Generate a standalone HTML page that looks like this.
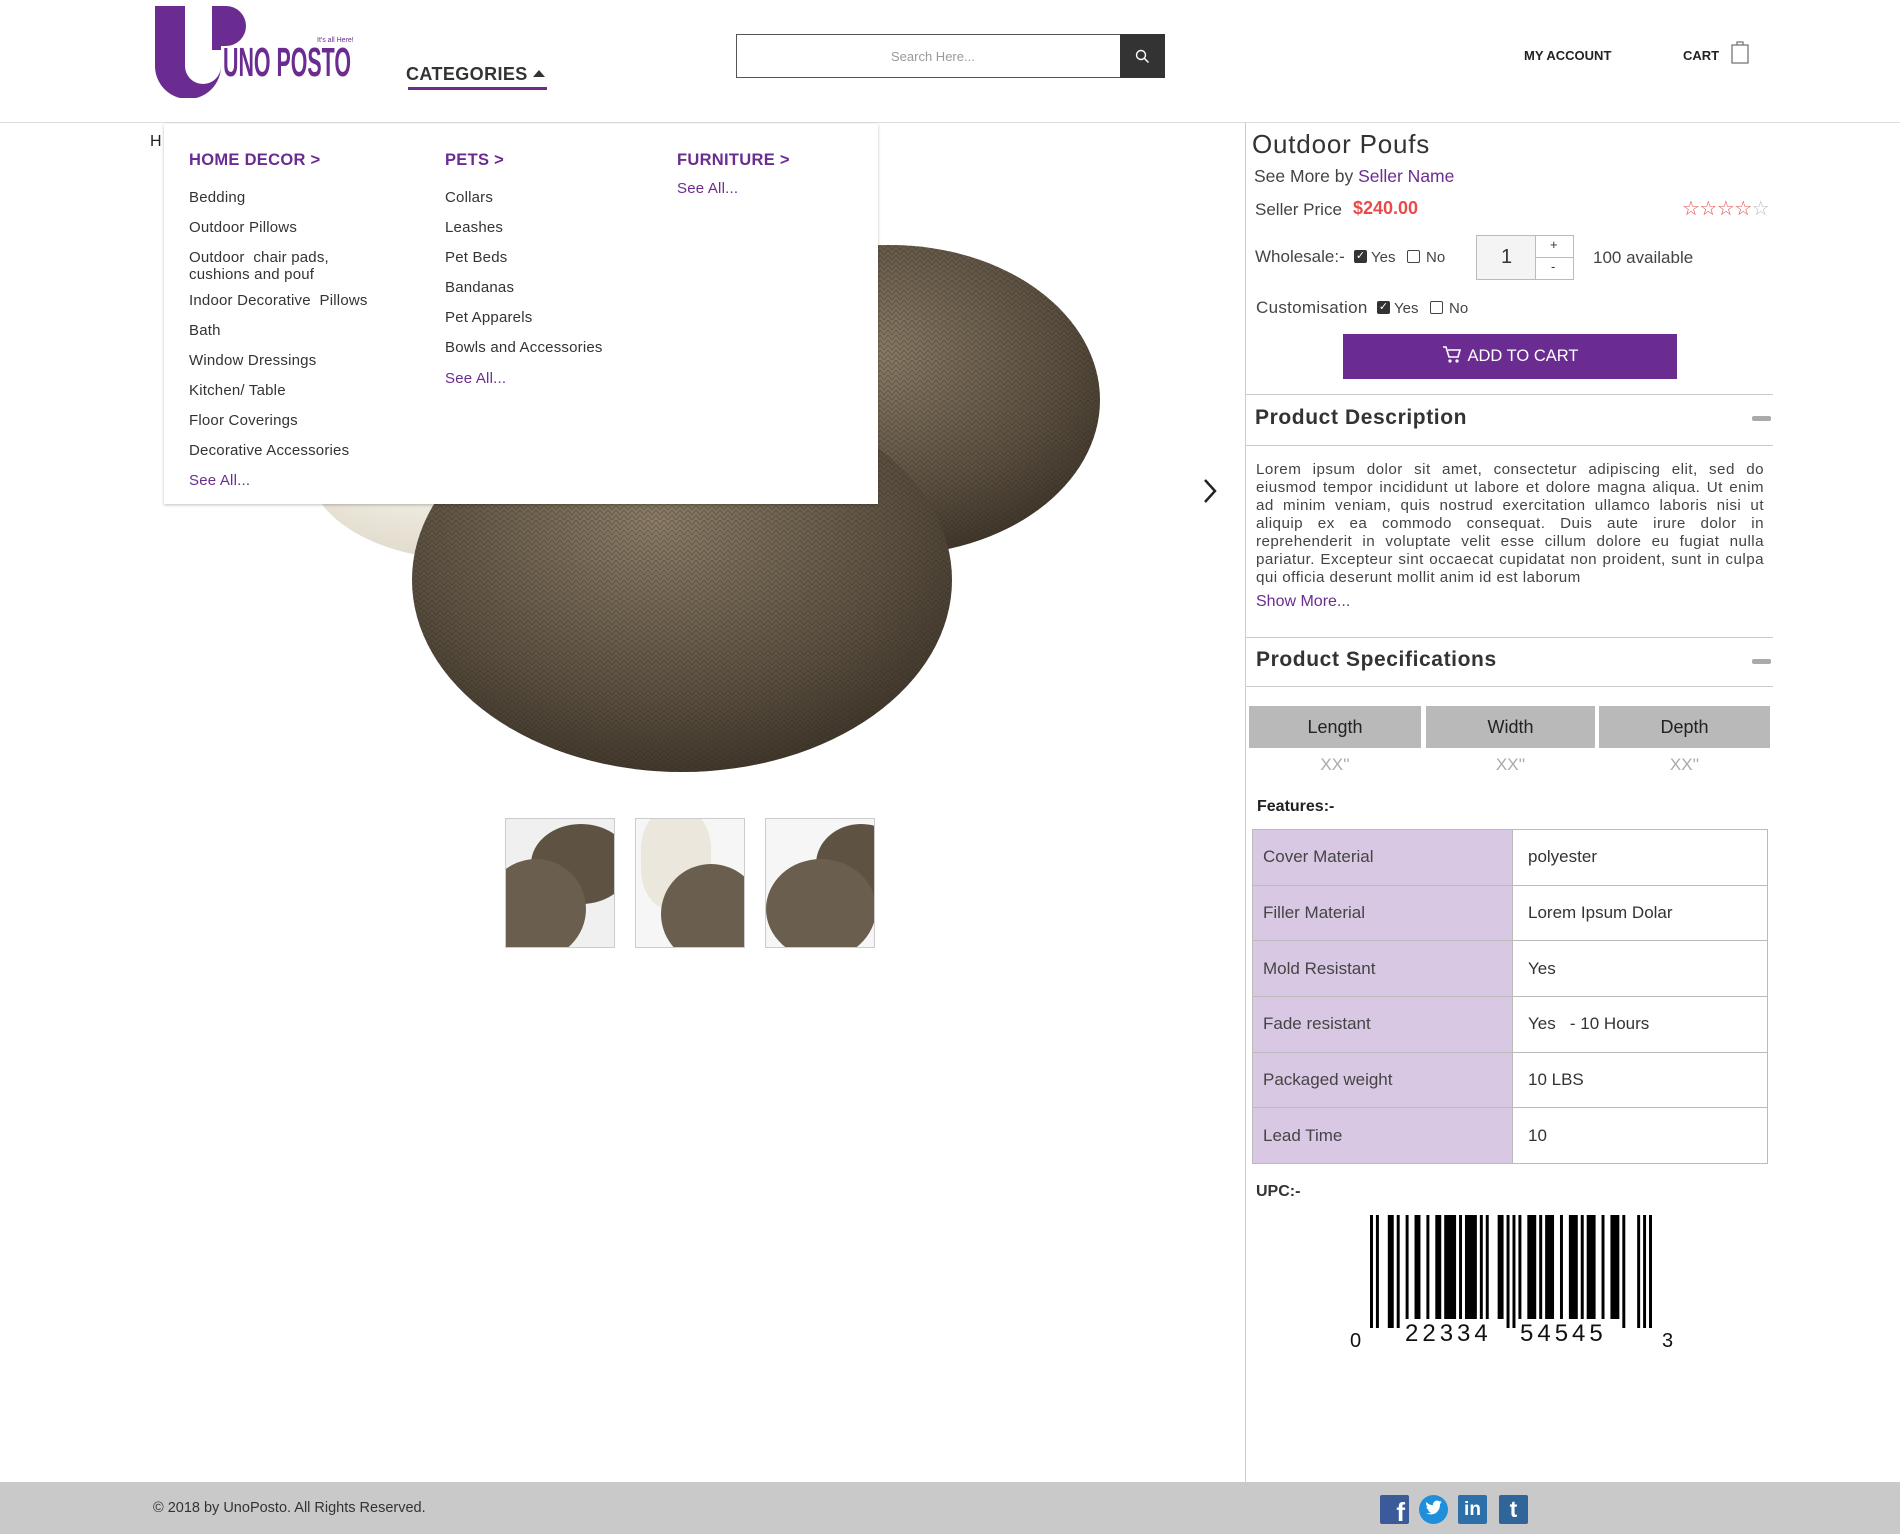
<!DOCTYPE html>
<html><head><meta charset="utf-8">
<style>
*{margin:0;padding:0;box-sizing:border-box}
body{width:1900px;height:1534px;position:relative;background:#fff;font-family:"Liberation Sans",sans-serif;color:#333;overflow:hidden}
.a{position:absolute;white-space:nowrap}
.dd div{position:absolute;font-size:15px;color:#333;white-space:nowrap;letter-spacing:.2px}
.dd .h{color:#6b2c91;font-size:16.5px;font-weight:bold;letter-spacing:.3px}
.dd .s{color:#6b2c91}
.r{font-size:17px;color:#444}
.spec td{font-size:17px;color:#444;border:1px solid #bbb;padding-left:10px;height:55.7px}
.spec td.l{background:#d9c8e4;width:260px}
.spec td.v{padding-left:15px;color:#333}
</style></head><body>

<svg class="a" style="left:155px;top:6px" width="200" height="92" viewBox="0 0 200 92">
<path d="M0 0h30v60a18 18 0 0 0 36 0V44h-9V0h14a20 20 0 0 1 0 40h-5v20a33 33 0 0 1-66 0z" fill="#6b2c91"/>
<text x="68" y="70" font-family="Liberation Sans Narrow,Liberation Sans,sans-serif" font-weight="bold" font-size="41" fill="#6b2c91" textLength="128" lengthAdjust="spacingAndGlyphs">UNO POSTO</text>
<text x="162" y="36" font-size="7" fill="#6b2c91">It's all Here!</text>
</svg>
<div class="a" style="left:406px;top:64px;font-size:18px;font-weight:bold;letter-spacing:.4px;color:#333">CATEGORIES</div>
<div class="a" style="left:533px;top:70px;width:0;height:0;border-left:6px solid transparent;border-right:6px solid transparent;border-bottom:7px solid #333"></div>
<div class="a" style="left:408px;top:87px;width:139px;height:3px;background:#6b2c91"></div>

<div class="a" style="left:736px;top:34px;width:429px;height:44px;border:1px solid #555"></div>
<div class="a" style="left:891px;top:49px;font-size:13px;color:#999">Search Here...</div>
<div class="a" style="left:1120px;top:34px;width:45px;height:44px;background:#333"></div>
<svg class="a" style="left:1135px;top:49px" width="15" height="15" viewBox="0 0 15 15"><circle cx="6" cy="6" r="4.5" stroke="#fff" stroke-width="1.4" fill="none"/><path d="M9.5 9.5l4 4" stroke="#fff" stroke-width="1.5"/></svg>

<div class="a" style="left:1524px;top:48px;font-size:13px;font-weight:bold;color:#222">MY ACCOUNT</div>
<div class="a" style="left:1683px;top:48px;font-size:13px;font-weight:bold;color:#222">CART</div>
<svg class="a" style="left:1730px;top:40px" width="20" height="24" viewBox="0 0 20 24"><rect x="2" y="5" width="16" height="18" fill="none" stroke="#777" stroke-width="1.3"/><path d="M7 5V2h6v3" fill="none" stroke="#777" stroke-width="1.3"/></svg>

<div class="a" style="left:0;top:122px;width:1900px;height:1px;background:#ddd"></div>
<div class="a" style="left:1245px;top:122px;width:1px;height:1360px;background:#ccc"></div>

<div class="a" style="left:150px;top:133px;font-size:16px;color:#222">H</div>

<svg class="a" style="left:250px;top:200px" width="950" height="600" viewBox="250 200 950 600">
<defs>
<radialGradient id="g1" cx="45%" cy="35%" r="70%"><stop offset="0" stop-color="#8a7c66"/><stop offset=".6" stop-color="#5e5343"/><stop offset="1" stop-color="#3b3227"/></radialGradient>
<radialGradient id="g2" cx="40%" cy="40%" r="70%"><stop offset="0" stop-color="#fbf8f1"/><stop offset="1" stop-color="#ddd6c6"/></radialGradient>
<pattern id="kn" width="8" height="10" patternUnits="userSpaceOnUse"><path d="M0 0l4 5l4-5M0 5l4 5l4-5" stroke="#2d261c" stroke-opacity=".35" fill="none" stroke-width="1"/></pattern>
</defs>
<ellipse cx="470" cy="470" rx="160" ry="90" fill="url(#g2)"/>
<ellipse cx="890" cy="400" rx="210" ry="155" fill="url(#g1)"/>
<ellipse cx="890" cy="400" rx="210" ry="155" fill="url(#kn)"/>
<ellipse cx="682" cy="580" rx="270" ry="192" fill="url(#g1)"/>
<ellipse cx="682" cy="580" rx="270" ry="192" fill="url(#kn)"/>
</svg>
<svg class="a" style="left:1202px;top:478px" width="16" height="26" viewBox="0 0 16 26"><path d="M3 2l10 11L3 24" stroke="#222" stroke-width="2.5" fill="none"/></svg>

<div class="a" style="left:505px;top:818px;width:110px;height:130px;border:1px solid #ccc;background:#f0f0f0;overflow:hidden"><div style="position:absolute;left:25px;top:5px;width:100px;height:80px;border-radius:50%;background:#5e5343"></div><div style="position:absolute;left:-20px;top:40px;width:100px;height:100px;border-radius:50%;background:#6a5f4e"></div></div>
<div class="a" style="left:635px;top:818px;width:110px;height:130px;border:1px solid #ccc;background:#f6f6f6;overflow:hidden"><div style="position:absolute;left:5px;top:-10px;width:70px;height:100px;border-radius:40%;background:#ece7dc"></div><div style="position:absolute;left:25px;top:45px;width:100px;height:100px;border-radius:50%;background:#6a5f4e"></div></div>
<div class="a" style="left:765px;top:818px;width:110px;height:130px;border:1px solid #ccc;background:#f6f6f6;overflow:hidden"><div style="position:absolute;left:50px;top:5px;width:90px;height:80px;border-radius:50%;background:#5e5343"></div><div style="position:absolute;left:0;top:40px;width:110px;height:100px;border-radius:50%;background:#6a5f4e"></div></div>

<div class="a dd" style="left:164px;top:124px;width:714px;height:380px;background:#fff;box-shadow:0 1px 3px rgba(0,0,0,.25)">
<div class="h" style="left:25px;top:27px">HOME DECOR &gt;</div>
<div style="left:25px;top:65px">Bedding</div>
<div style="left:25px;top:95px">Outdoor Pillows</div>
<div style="left:25px;top:125px;line-height:17px">Outdoor&nbsp; chair pads,<br>cushions and pouf</div>
<div style="left:25px;top:168px">Indoor Decorative&nbsp; Pillows</div>
<div style="left:25px;top:198px">Bath</div>
<div style="left:25px;top:228px">Window Dressings</div>
<div style="left:25px;top:258px">Kitchen/ Table</div>
<div style="left:25px;top:288px">Floor Coverings</div>
<div style="left:25px;top:318px">Decorative Accessories</div>
<div class="s" style="left:25px;top:348px">See All...</div>
<div class="h" style="left:281px;top:27px">PETS &gt;</div>
<div style="left:281px;top:65px">Collars</div>
<div style="left:281px;top:95px">Leashes</div>
<div style="left:281px;top:125px">Pet Beds</div>
<div style="left:281px;top:155px">Bandanas</div>
<div style="left:281px;top:185px">Pet Apparels</div>
<div style="left:281px;top:215px">Bowls and Accessories</div>
<div class="s" style="left:281px;top:246px">See All...</div>
<div class="h" style="left:513px;top:27px">FURNITURE &gt;</div>
<div class="s" style="left:513px;top:56px">See All...</div>
</div>

<div class="a" style="left:1252px;top:129px;font-size:26px;color:#333;letter-spacing:.8px">Outdoor Poufs</div>
<div class="a" style="left:1254px;top:166px;font-size:17.5px;color:#444">See More by <span style="color:#6b2c91">Seller Name</span></div>
<div class="a" style="left:1255px;top:200px;font-size:17px;color:#444">Seller Price</div>
<div class="a" style="left:1353px;top:198px;font-size:18px;font-weight:bold;color:#e84b4b">$240.00</div>
<div class="a" style="left:1682px;top:196px;font-size:20px;color:#e84b4b;letter-spacing:-0.5px">☆☆☆☆<span style="color:#bbb">☆</span></div>

<div class="a r" style="left:1255px;top:247px">Wholesale:-</div>
<div class="a" style="left:1354px;top:250px;width:13px;height:13px;background:#333;border-radius:2px;color:#fff;font-size:11px;line-height:13px;text-align:center">✓</div>
<div class="a" style="left:1371px;top:249px;font-size:15px;color:#444">Yes</div>
<div class="a" style="left:1407px;top:250px;width:13px;height:13px;border:1px solid #444;border-radius:2px"></div>
<div class="a" style="left:1426px;top:249px;font-size:15px;color:#444">No</div>
<div class="a" style="left:1476px;top:235px;width:98px;height:45px;border:1px solid #bbb;background:#f4f4f4"></div>
<div class="a" style="left:1535px;top:235px;width:39px;height:45px;border:1px solid #bbb;background:#fff"></div>
<div class="a" style="left:1535px;top:257px;width:39px;height:1px;background:#bbb"></div>
<div class="a" style="left:1501px;top:246px;font-size:20px;color:#333">1</div>
<div class="a" style="left:1550px;top:237px;font-size:13px">+</div>
<div class="a" style="left:1551px;top:259px;font-size:13px">-</div>
<div class="a r" style="left:1593px;top:248px">100 available</div>

<div class="a r" style="left:1256px;top:298px;letter-spacing:.3px">Customisation</div>
<div class="a" style="left:1377px;top:301px;width:13px;height:13px;background:#333;border-radius:2px;color:#fff;font-size:11px;line-height:13px;text-align:center">✓</div>
<div class="a" style="left:1394px;top:300px;font-size:15px;color:#444">Yes</div>
<div class="a" style="left:1430px;top:301px;width:13px;height:13px;border:1px solid #444;border-radius:2px"></div>
<div class="a" style="left:1449px;top:300px;font-size:15px;color:#444">No</div>

<div class="a" style="left:1343px;top:334px;width:334px;height:45px;background:#6b2c91;color:#fff;font-size:16.5px;line-height:45px;text-align:center"><svg width="20" height="18" viewBox="0 0 20 18" style="vertical-align:-3px;margin-right:6px"><path d="M1 1h3l3 10h9l2-7H6" fill="none" stroke="#fff" stroke-width="1.6"/><circle cx="8" cy="15" r="1.6" fill="#fff"/><circle cx="15" cy="15" r="1.6" fill="#fff"/></svg>ADD TO CART</div>

<div class="a" style="left:1246px;top:394px;width:527px;height:1px;background:#ccc"></div>
<div class="a" style="left:1255px;top:406px;font-size:21px;font-weight:bold;color:#333;letter-spacing:.6px">Product Description</div>
<div class="a" style="left:1752px;top:416px;width:19px;height:5px;background:#aaa;border-radius:2px"></div>
<div class="a" style="left:1246px;top:445px;width:527px;height:1px;background:#ccc"></div>
<div class="a" style="left:1256px;top:461px;width:508px;white-space:normal;text-align:justify;font-size:15.2px;line-height:18px;color:#444;letter-spacing:.45px">Lorem ipsum dolor sit amet, consectetur adipiscing elit, sed do eiusmod tempor incididunt ut labore et dolore magna aliqua. Ut enim ad minim veniam, quis nostrud exercitation ullamco laboris nisi ut aliquip ex ea commodo consequat. Duis aute irure dolor in reprehenderit in voluptate velit esse cillum dolore eu fugiat nulla pariatur. Excepteur sint occaecat cupidatat non proident, sunt in culpa qui officia deserunt mollit anim id est laborum</div>
<div class="a" style="left:1256px;top:593px;font-size:16px;color:#6b2c91">Show More...</div>
<div class="a" style="left:1246px;top:637px;width:527px;height:1px;background:#ccc"></div>
<div class="a" style="left:1256px;top:648px;font-size:21px;font-weight:bold;color:#333;letter-spacing:.6px">Product Specifications</div>
<div class="a" style="left:1752px;top:659px;width:19px;height:5px;background:#aaa;border-radius:2px"></div>
<div class="a" style="left:1246px;top:686px;width:527px;height:1px;background:#ccc"></div>

<div class="a" style="left:1249px;top:706px;width:172px;height:42px;background:#b9b9b9;text-align:center;line-height:42px;font-size:18px;color:#222">Length</div>
<div class="a" style="left:1426px;top:706px;width:169px;height:42px;background:#b9b9b9;text-align:center;line-height:42px;font-size:18px;color:#222">Width</div>
<div class="a" style="left:1599px;top:706px;width:171px;height:42px;background:#b9b9b9;text-align:center;line-height:42px;font-size:18px;color:#222">Depth</div>
<div class="a" style="left:1249px;top:755px;width:172px;text-align:center;font-size:17px;color:#aaa">XX''</div>
<div class="a" style="left:1426px;top:755px;width:169px;text-align:center;font-size:17px;color:#aaa">XX''</div>
<div class="a" style="left:1599px;top:755px;width:171px;text-align:center;font-size:17px;color:#aaa">XX''</div>

<div class="a" style="left:1257px;top:798px;font-size:16px;font-weight:bold;color:#222">Features:-</div>
<table class="a spec" style="left:1252px;top:829px;width:516px;border-collapse:collapse">
<tr><td class="l">Cover Material</td><td class="v">polyester</td></tr>
<tr><td class="l">Filler Material</td><td class="v">Lorem Ipsum Dolar</td></tr>
<tr><td class="l">Mold Resistant</td><td class="v">Yes</td></tr>
<tr><td class="l">Fade resistant</td><td class="v">Yes &nbsp; - 10 Hours</td></tr>
<tr><td class="l">Packaged weight</td><td class="v">10 LBS</td></tr>
<tr><td class="l">Lead Time</td><td class="v">10</td></tr>
</table>

<div class="a" style="left:1256px;top:1183px;font-size:16px;font-weight:bold;color:#333">UPC:-</div>
<svg class="a" style="left:1370px;top:1215px" width="282" height="113" viewBox="0 0 95 113" preserveAspectRatio="none" fill="#000">
<rect x="0" y="0" width="1" height="113"/><rect x="2" y="0" width="1" height="113"/>
<rect x="6" y="0" width="2" height="113"/><rect x="9" y="0" width="1" height="113"/>
<rect x="12" width="1" height="104"/><rect x="15" width="2" height="104"/>
<rect x="19" width="1" height="104"/><rect x="22" width="2" height="104"/>
<rect x="25" width="4" height="104"/><rect x="30" width="1" height="104"/>
<rect x="32" width="4" height="104"/><rect x="37" width="1" height="104"/>
<rect x="39" width="1" height="104"/><rect x="43" width="2" height="104"/>
<rect x="46" width="1" height="113"/><rect x="48" width="1" height="113"/>
<rect x="50" width="1" height="104"/><rect x="53" width="3" height="104"/>
<rect x="57" width="1" height="104"/><rect x="59" width="3" height="104"/>
<rect x="64" width="1" height="104"/><rect x="67" width="3" height="104"/>
<rect x="71" width="1" height="104"/><rect x="73" width="3" height="104"/>
<rect x="78" width="1" height="104"/><rect x="81" width="3" height="104"/>
<rect x="85" width="1" height="113"/><rect x="90" width="1" height="113"/>
<rect x="92" width="1" height="113"/><rect x="94" width="1" height="113"/>
</svg>
<div class="a" style="left:1350px;top:1330px;font-size:20px;color:#111">0</div>
<div class="a" style="left:1405px;top:1320px;font-size:24px;letter-spacing:4px;color:#111">22334</div>
<div class="a" style="left:1520px;top:1320px;font-size:24px;letter-spacing:4px;color:#111">54545</div>
<div class="a" style="left:1662px;top:1330px;font-size:20px;color:#111">3</div>

<div class="a" style="left:0;top:1482px;width:1900px;height:52px;background:#c9c9c9"></div>
<div class="a" style="left:153px;top:1500px;font-size:14.5px;color:#333">© 2018 by UnoPosto. All Rights Reserved.</div>
<div class="a" style="left:1380px;top:1495px;width:29px;height:29px;background:#3b5a9a;border-radius:2px;color:#fff;font-weight:bold;font-size:26px;text-align:right;padding-right:4px;line-height:34px">f</div>
<svg class="a" style="left:1419px;top:1495px" width="29" height="29" viewBox="0 0 29 29"><circle cx="14.5" cy="14.5" r="14.5" fill="#1f8fdc"/><path d="M7 18c3 2 8 2 11-1s3-6 3-8l2-2-2 .5 1.5-2-2 1a4 4 0 0 0-6.5 3.5C11 10 9 9 7.5 7c-1 2 0 4 1.5 5l-1.5-.3c0 2 1.5 3 3 3.4h-1.5c.5 1.3 1.8 2 3 2C10.5 18.3 8.5 18.5 7 18z" fill="#fff"/></svg>
<div class="a" style="left:1458px;top:1495px;width:29px;height:29px;background:#2d6fa8;border-radius:2px;color:#fff;font-weight:bold;font-size:19px;text-align:center;line-height:30px">in</div>
<div class="a" style="left:1499px;top:1495px;width:29px;height:29px;background:#2f6598;border-radius:2px;color:#fff;font-weight:bold;font-size:23px;text-align:center;line-height:28px">t</div>
</body></html>
